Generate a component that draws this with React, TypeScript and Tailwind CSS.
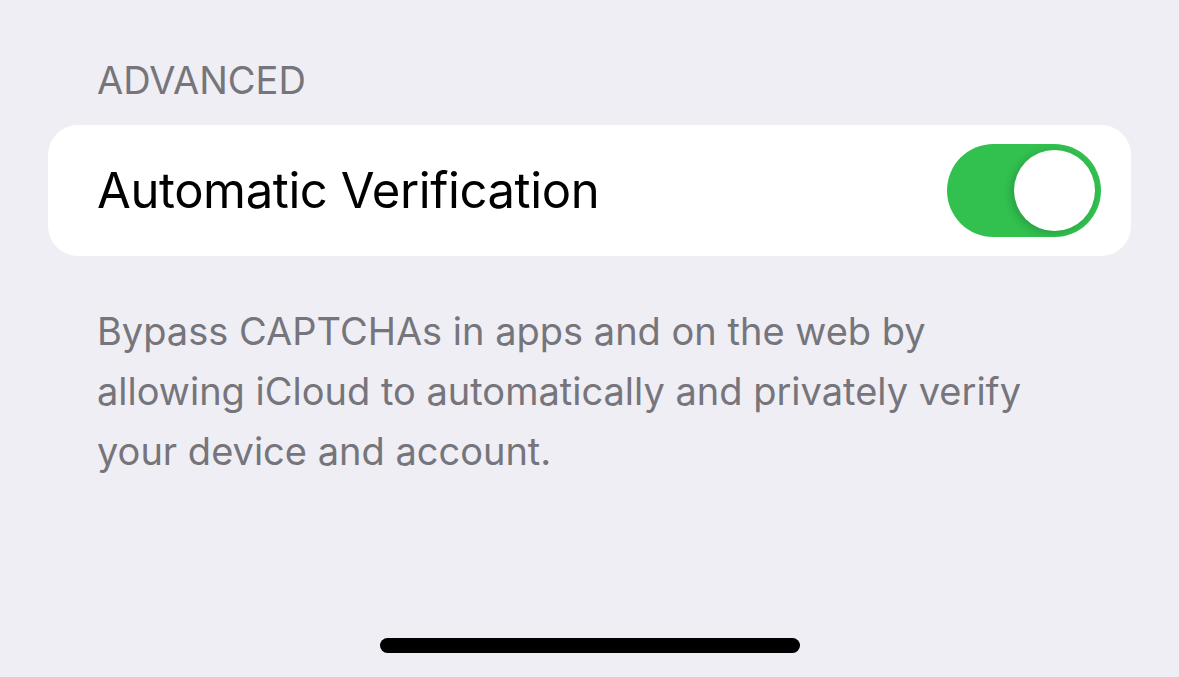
import { useState } from "react";

function Toggle({ on, onChange }: { on: boolean; onChange: (v: boolean) => void }) {
  return (
    <button
      type="button"
      role="switch"
      aria-checked={on}
      onClick={() => onChange(!on)}
      className={`relative h-[93px] w-[154px] shrink-0 rounded-full transition-colors ${
        on ? "bg-[#32c04f]" : "bg-[#e5e5ea]"
      }`}
    >
      <span
        className={`absolute top-[6px] h-[81px] w-[81px] rounded-full bg-white shadow-[-3px_2px_8px_rgba(0,0,0,0.18)] transition-all ${
          on ? "left-[67px]" : "left-[6px]"
        }`}
      />
    </button>
  );
}

export default function App() {
  const [enabled, setEnabled] = useState(true);

  return (
    <div className="flex h-[677px] w-full flex-col bg-[#efeef4] px-[48px] font-['Inter','Liberation_Sans',sans-serif]">
      <h2 className="mt-[58px] pl-[49px] text-[38px] leading-[44px] text-[#76757b]">ADVANCED</h2>

      <div className="mt-[23px] flex h-[131px] items-center justify-between rounded-[30px] bg-white pl-[49px] pr-[30px]">
        <span className="text-[49px] leading-none tracking-[-0.4px] text-black">Automatic Verification</span>
        <Toggle on={enabled} onChange={setEnabled} />
      </div>

      <p className="mt-[45px] pl-[49px] text-[38px] leading-[60px] text-[#76757b]">
        <span className="block">Bypass CAPTCHAs in apps and on the web by</span>
        <span className="block">allowing iCloud to automatically and privately verify</span>
        <span className="block">your device and account.</span>
      </p>

      <div className="mt-auto flex justify-center pb-[24px]">
        <div className="h-[15px] w-[420px] rounded-full bg-black" />
      </div>
    </div>
  );
}
